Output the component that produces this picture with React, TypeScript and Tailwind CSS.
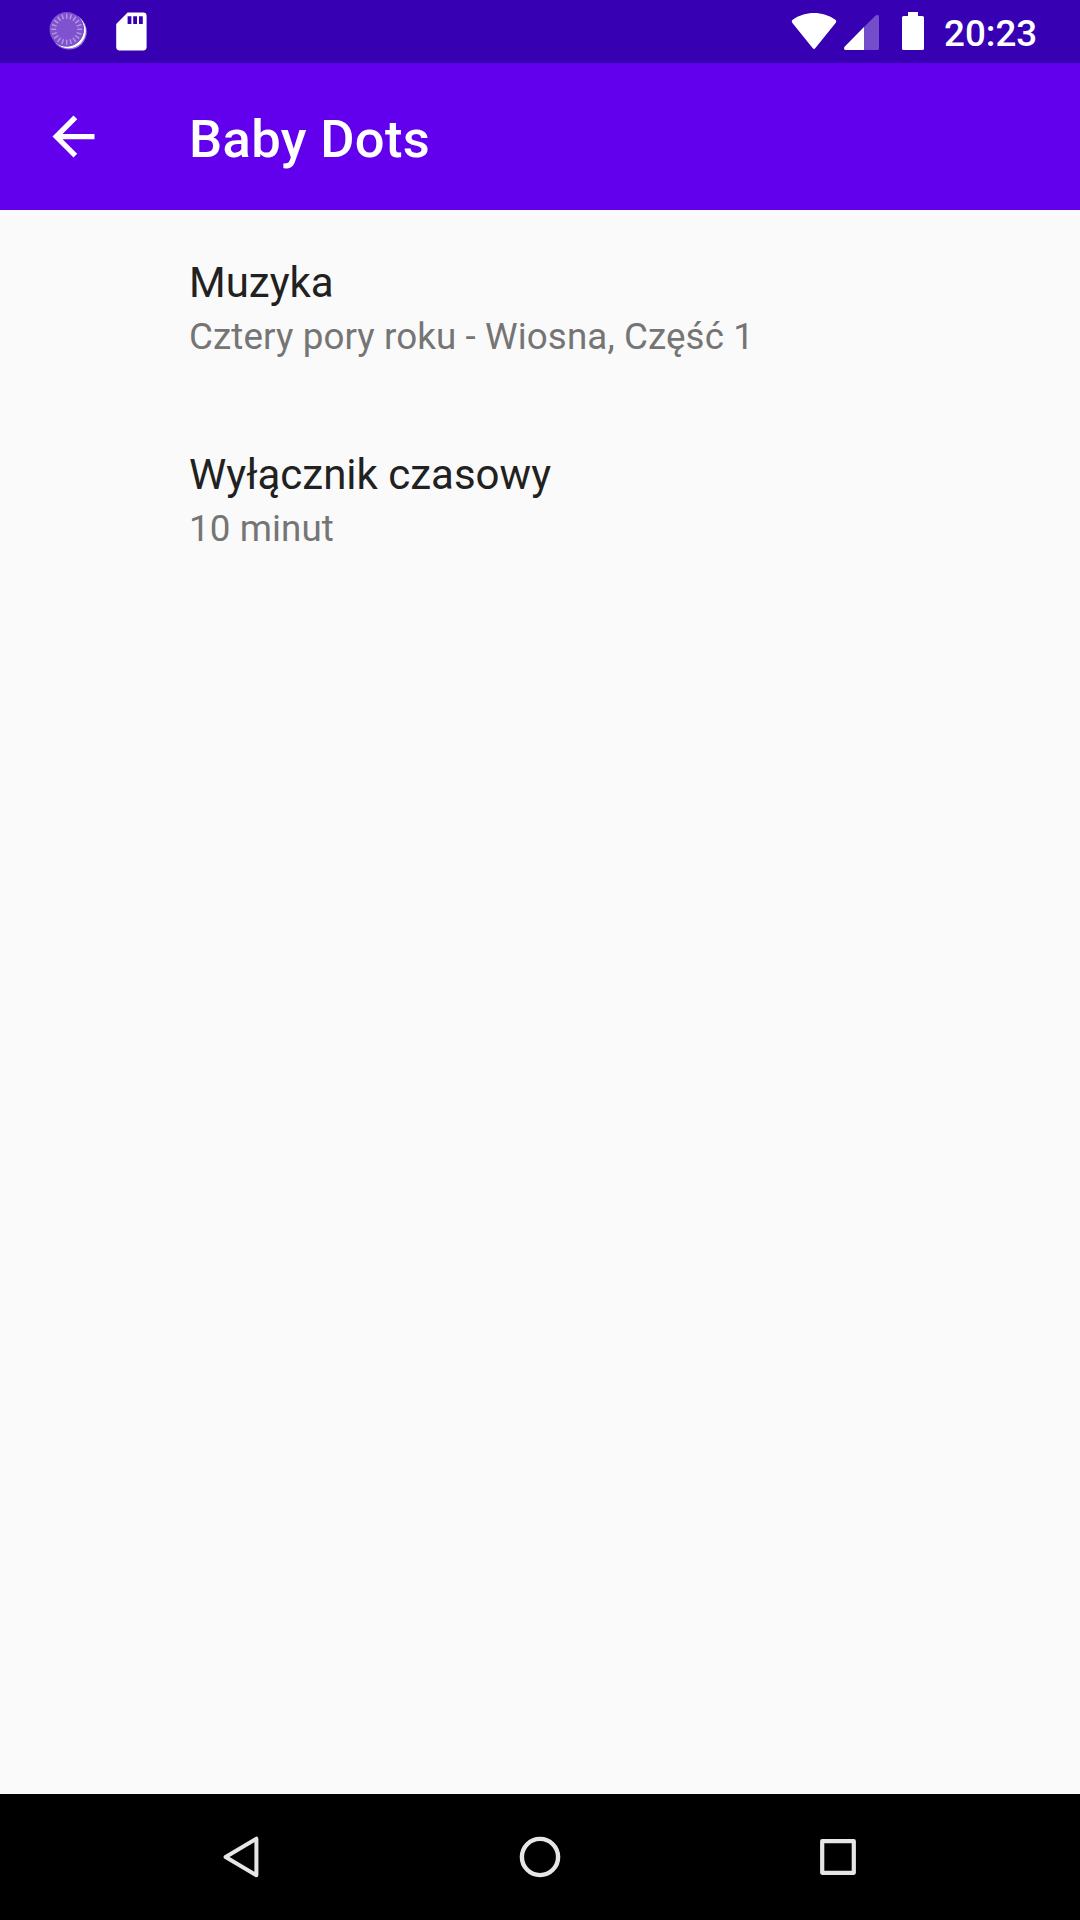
import React from "react";

const SPOKES = Array.from({ length: 20 }, (_, i) => i * 18);

function SyncIcon() {
  return (
    <svg width="42" height="63" viewBox="48 0 42 63" className="shrink-0">
      <defs>
        <mask id="crescent">
          <rect x="48" y="0" width="42" height="63" fill="white" />
          <circle cx="66.7" cy="29.3" r="17.2" fill="black" />
        </mask>
      </defs>
      <circle cx="69" cy="31.8" r="17.8" fill="#fff" fillOpacity="0.45" mask="url(#crescent)" />
      <circle cx="68.6" cy="31" r="17.2" fill="#fff" mask="url(#crescent)" />
      <circle cx="66.7" cy="29.3" r="17.2" fill="#8052cf" />
      {SPOKES.map((a) => (
        <line
          key={a}
          x1="66.7"
          y1="13.8"
          x2="66.7"
          y2="18.8"
          stroke="#b29ae2"
          strokeWidth="1.4"
          transform={`rotate(${a} 66.7 29.3)`}
        />
      ))}
    </svg>
  );
}

function SdCardIcon() {
  return (
    <svg width="32" height="63" viewBox="116 0 32 63" className="shrink-0">
      <path
        fill="#fff"
        fillRule="evenodd"
        d="M127.6 12.6H143.2Q146.6 12.6 146.6 16V47Q146.6 50.4 143.2 50.4H119.6Q116.2 50.4 116.2 47V24ZM127.6 16.2V24H131.4V16.2ZM133.2 16.2V24H137V16.2ZM139 16.2V24H142.8V16.2Z"
      />
    </svg>
  );
}

function WifiIcon() {
  return (
    <svg width="46" height="63" viewBox="791 0 46 63" className="shrink-0">
      <path
        fill="#fff"
        d="M792.2 22.8Q791 21 792.6 19.8C805 10.8 823 10.8 835.4 19.8Q837 21 835.8 22.8L815.4 48Q814 49.8 812.6 48Z"
      />
    </svg>
  );
}

function SignalIcon() {
  return (
    <svg width="36" height="63" viewBox="844 0 36 63" className="shrink-0">
      <path
        fill="#fff"
        fillOpacity="0.3"
        d="M864 27L875.6 15.6Q877 14.6 878.2 15.1Q879 15.5 879 16.8V48.4Q879 50 877.4 50H864Z"
      />
      <path fill="#fff" d="M864 27V50H845.4Q844 50 844 48.6Q844 47.3 844.8 46.4Z" />
    </svg>
  );
}

function BatteryIcon() {
  return (
    <svg width="22" height="63" viewBox="902 0 22 63" className="shrink-0">
      <path
        fill="#fff"
        d="M908 12H918V16H922.4Q924 16 924 17.6V48.4Q924 50 922.4 50H903.6Q902 50 902 48.4V17.6Q902 16 903.6 16H908Z"
      />
    </svg>
  );
}

function StatusBar() {
  return (
    <div className="flex h-[63px] items-center justify-between bg-[#3700b3] pr-[42px] pl-12">
      <div className="flex gap-[26px]">
        <SyncIcon />
        <SdCardIcon />
      </div>
      <div className="flex items-center">
        <WifiIcon />
        <div className="ml-[7px] flex">
          <SignalIcon />
        </div>
        <div className="ml-[22px] flex">
          <BatteryIcon />
        </div>
        <span className="ml-5 w-[94px] pt-1 text-[36.75px] leading-[43px] font-medium whitespace-nowrap text-white">
          20:23
        </span>
      </div>
    </div>
  );
}

function AppBar() {
  return (
    <header className="flex h-[147px] items-center bg-[#6200ee] pl-[42px]">
      <button aria-label="Wstecz" className="size-[63px]">
        <svg viewBox="0 0 24 24" className="size-[63px]" fill="#fff">
          <path d="M20 11H7.83l5.59-5.59L12 4l-8 8 8 8 1.41-1.41L7.83 13H20v-2z" />
        </svg>
      </button>
      <h1 className="ml-[84px] pt-1 text-[52.5px] leading-[62px] font-medium tracking-[0.35px] text-white">
        Baby Dots
      </h1>
    </header>
  );
}

function Preference({ title, summary }: { title: string; summary: string }) {
  return (
    <div className="h-48 pt-12 pl-[189px]">
      <div className="text-[42px] leading-[49px] text-[#212121]">{title}</div>
      <div className="mt-2 text-[36.75px] leading-[43px] tracking-[0.1px] text-[#757575]">{summary}</div>
    </div>
  );
}

function NavBar() {
  return (
    <nav className="flex h-[126px] items-center justify-center bg-black">
      <button aria-label="Wstecz" className="flex w-[298px] justify-center">
        <svg width="60" height="60" viewBox="212 1827 60 60" fill="none" stroke="#e6e6e6" strokeWidth="4" strokeLinejoin="round">
          <path d="M225.6 1857L256.4 1838.7V1875.3Z" />
        </svg>
      </button>
      <button aria-label="Ekran główny" className="flex w-[298px] justify-center">
        <svg width="60" height="60" viewBox="510 1827 60 60" fill="none" stroke="#e6e6e6" strokeWidth="4.4">
          <circle cx="540" cy="1857" r="18.1" />
        </svg>
      </button>
      <button aria-label="Ostatnie" className="flex w-[298px] justify-center">
        <svg width="60" height="60" viewBox="808 1827 60 60" fill="none" stroke="#e6e6e6" strokeWidth="4.2" strokeLinejoin="round">
          <rect x="822.2" y="1841.2" width="31.6" height="31.6" />
        </svg>
      </button>
    </nav>
  );
}

export default function App() {
  return (
    <div className="flex h-[1920px] w-[1080px] flex-col overflow-hidden bg-[#fafafa] font-[Roboto,sans-serif]">
      <StatusBar />
      <AppBar />
      <main className="flex-1">
        <Preference title="Muzyka" summary="Cztery pory roku - Wiosna, Część 1" />
        <Preference title="Wyłącznik czasowy" summary="10 minut" />
      </main>
      <NavBar />
    </div>
  );
}
